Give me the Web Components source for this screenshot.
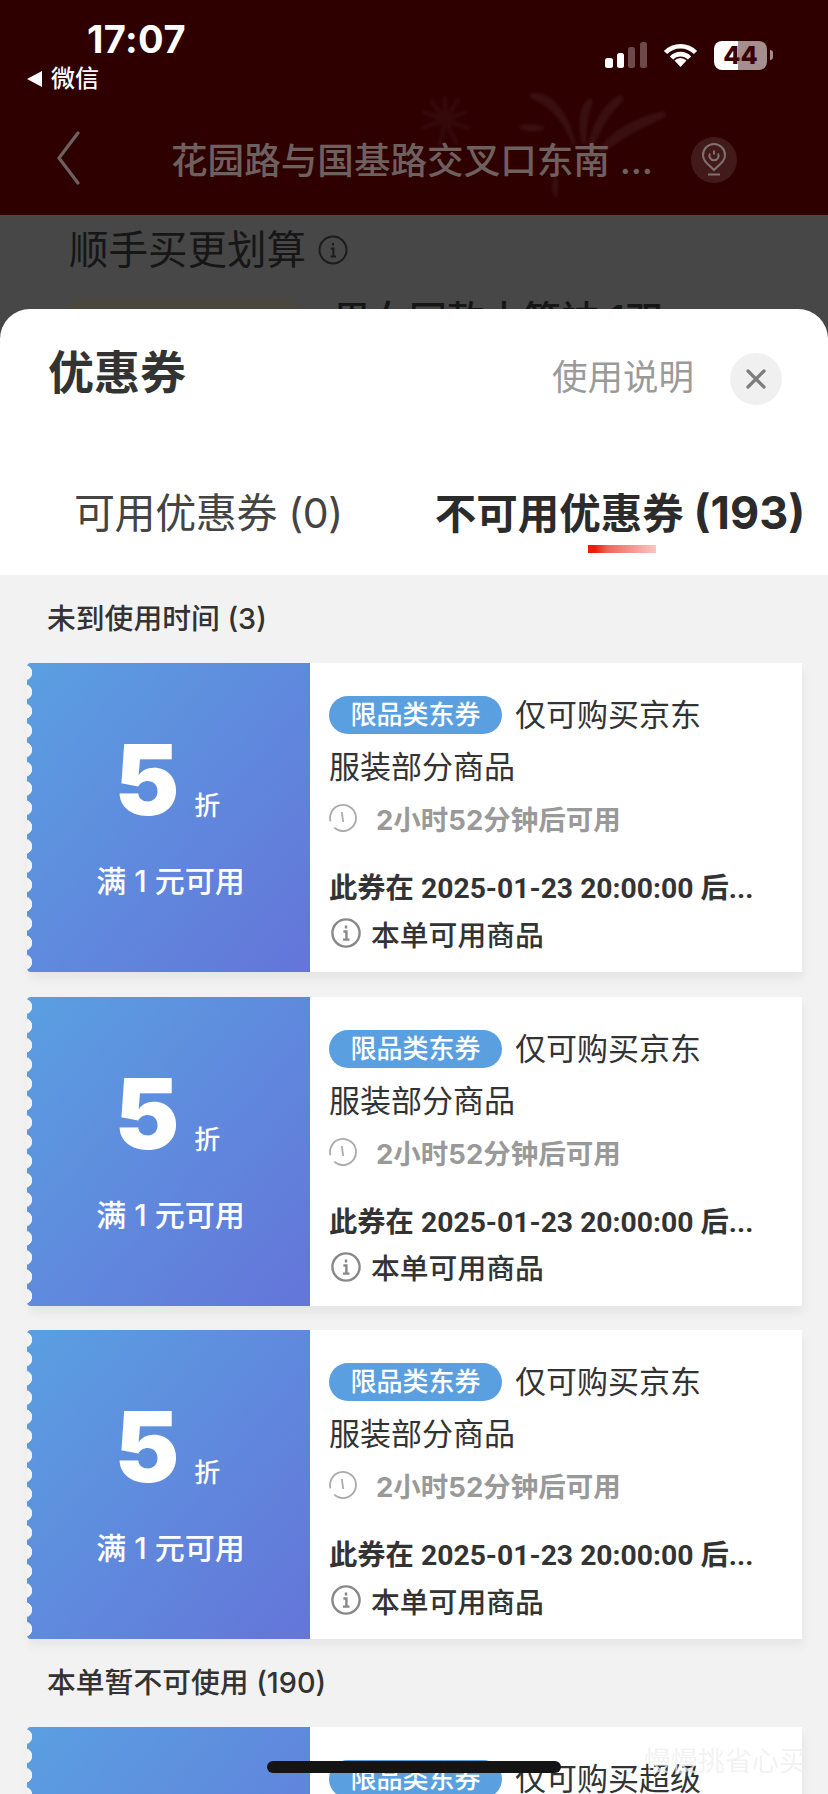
<!DOCTYPE html>
<html lang="zh-CN">
<head>
<meta charset="utf-8">
<title>优惠券</title>
<style>
    html, body {
        margin: 0;
        height: 1794px;
        overflow: hidden;
        background: #474747;
        font-family: Inter, "Noto Sans CJK SC", sans-serif;
        color: #333;
    }
</style>
</head>
<body>
<status-bar></status-bar>
<nav-bar>花园路与国基路交叉口东南 ...</nav-bar>
<behind-sheet></behind-sheet>
<coupon-sheet>
    <coupon-tab slot="tabs">可用优惠券 (0)</coupon-tab>
    <coupon-tab slot="tabs" active>不可用优惠券 <span>(193)</span></coupon-tab>

    <coupon-group label="未到使用时间 (3)">
        <coupon-card amount="5" condition="满 1 元可用" chip="限品类东券">
            仅可购买京东
            <span slot="more">服装部分商品</span>
            <span slot="remain">2小时52分钟后可用</span>
            <span slot="date">此券在 2025-01-23 20:00:00 后...</span>
        </coupon-card>
        <coupon-card amount="5" condition="满 1 元可用" chip="限品类东券">
            仅可购买京东
            <span slot="more">服装部分商品</span>
            <span slot="remain">2小时52分钟后可用</span>
            <span slot="date">此券在 2025-01-23 20:00:00 后...</span>
        </coupon-card>
        <coupon-card amount="5" condition="满 1 元可用" chip="限品类东券">
            仅可购买京东
            <span slot="more">服装部分商品</span>
            <span slot="remain">2小时52分钟后可用</span>
            <span slot="date">此券在 2025-01-23 20:00:00 后...</span>
        </coupon-card>
    </coupon-group>
    <coupon-group label="本单暂不可使用 (190)">
        <coupon-card cut chip="限品类东券">仅可购买超级</coupon-card>
    </coupon-group>
</coupon-sheet>
<home-indicator>慢慢挑省心买</home-indicator>

<script>
class StatusBar extends HTMLElement {
    constructor() {
        super();
        this.attachShadow({mode: 'open'}).innerHTML = `
        <style>
            :host {
                display: flex;
                justify-content: space-between;
                box-sizing: border-box;
                height: 110px;
                padding: 20px 55px 0 27px;
                background: #2e0000;
                color: #fff;
            }
            .time {
                margin-left: 60px;
                font-size: 38px;
                line-height: 38px;
                font-weight: 700;
                letter-spacing: .4px;
            }
            .back {
                display: flex;
                align-items: center;
                gap: 9px;
                margin-top: 6px;
                font-size: 24px;
                line-height: 30px;
                font-weight: 500;
            }
            .icons {
                display: flex;
                align-items: center;
                height: 30px;
                margin-top: 20px;
            }
            .signal { margin-right: 16px; }
            .wifi { margin-right: 16px; }
            .battery {
                width: 53px;
                height: 29px;
                border-radius: 8px;
                background: linear-gradient(90deg, #fff 45%, #a48e8e 45%);
                color: #3a0006;
                font-size: 25px;
                line-height: 29px;
                font-weight: 800;
                text-align: center;
            }
            .nub {
                width: 3px;
                height: 10px;
                margin-left: 3px;
                border-radius: 0 3px 3px 0;
                background: #a48e8e;
            }
        </style>
        <div>
            <div class="time">17:07</div>
            <div class="back">
                <svg width="15" height="16" viewBox="0 0 15 16"><path d="M15 0v16L0 8z" fill="#fff"/></svg>
                微信
            </div>
        </div>
        <div class="icons">
            <svg class="signal" width="42" height="27" viewBox="0 0 42 27">
                <rect x="0" y="16" width="8" height="10" rx="2.5" fill="#fff"/>
                <rect x="12" y="11" width="7" height="15" rx="2.5" fill="#fff"/>
                <rect x="23" y="5" width="7" height="21" rx="2.5" fill="#6d4a4a"/>
                <rect x="35" y="0" width="7" height="26" rx="2.5" fill="#6d4a4a"/>
            </svg>
            <svg class="wifi" width="35" height="24" viewBox="0 0 35 24">
                <path d="M2.5 9.5A21 21 0 0 1 32.5 9.5M8.5 15A12.5 12.5 0 0 1 26.5 15" fill="none" stroke="#fff" stroke-width="4.6"/>
                <path d="M17.5 24L11.5 17.6A8 8 0 0 1 23.5 17.6z" fill="#fff"/>
            </svg>
            <div class="battery">44</div>
            <div class="nub"></div>
        </div>`;
    }
}

class NavBar extends HTMLElement {
    constructor() {
        super();
        this.attachShadow({mode: 'open'}).innerHTML = `
        <style>
            :host {
                display: flex;
                align-items: center;
                position: relative;
                box-sizing: border-box;
                height: 105px;
                padding: 0 91px 5px 56px;
                background: #2e0000;
                color: #6f6060;
                font-size: 36.6px;
            }
            .fireworks { position: absolute; left: 0; top: -110px; filter: blur(1.5px); }
            .title {
                position: relative;
                flex: 1;
                margin: 0 0 4px 91px;
                font-weight: 500;
                white-space: nowrap;
            }
            .back, .pin { position: relative; flex: none; }
            .back { margin-bottom: 4px; }
        </style>
        <svg class="fireworks" width="828" height="215" viewBox="0 0 828 215" fill="#fff" fill-opacity=".06">
            <g stroke="#fff" stroke-opacity=".035" stroke-width="5" stroke-linecap="round">
                <path d="M445 120V98M445 120L458 100M445 120L466 112M445 120L468 128M445 120L456 142M445 120L440 144M445 120L424 112M445 120L422 128M445 120L432 102"/>
            </g>
            <path d="M572 146C566 124 552 108 533 99C527 96 530 92 538 93C556 95 570 118 576 144z"/>
            <path d="M582 144C578 126 578 110 586 101C590 96 594 99 592 105C588 118 586 130 586 144z"/>
            <path d="M588 146C592 124 602 106 616 97C622 93 626 97 622 102C610 114 600 130 594 147z"/>
            <path d="M598 150C612 130 634 118 660 112C668 110 668 116 662 119C640 128 620 140 602 154z"/>
            <path d="M518 127C526 122 538 124 546 128C538 133 526 133 518 127z"/>
            <path d="M552 190C556 198 556 206 558 190C560 172 552 172 552 190z"/>
        </svg>
        <svg class="back" width="24" height="54" viewBox="0 0 24 54">
            <path d="M22 2L3 27L22 52" fill="none" stroke="#6f6060" stroke-width="3.2" stroke-linecap="round" stroke-linejoin="round"/>
        </svg>
        <div class="title"><slot></slot></div>
        <svg class="pin" width="46" height="46" viewBox="0 0 46 46">
            <circle cx="23" cy="23" r="23" fill="#fff" fill-opacity=".1"/>
            <path d="M23 33C17 27 12 24 12 18A11 11 0 0 1 34 18C34 24 29 27 23 33z" fill="none" stroke="#817272" stroke-width="2"/>
            <path d="M19 16.5a4.6 4.6 0 1 0 8 0M23 13.5v4M17 37.5h12" fill="none" stroke="#817272" stroke-width="2"/>
        </svg>`;
    }
}

class BehindSheet extends HTMLElement {
    constructor() {
        super();
        this.attachShadow({mode: 'open'}).innerHTML = `
        <style>
            :host {
                display: block;
                box-sizing: border-box;
                height: 94px;
                padding: 10px 0 0 69px;
                overflow: hidden;
                background: #474747;
                color: #161616;
                font-size: 39.5px;
            }
            .head {
                display: flex;
                align-items: center;
                gap: 12px;
                height: 50px;
                line-height: 50px;
            }
            .goods {
                display: flex;
                gap: 33px;
                margin-top: 25px;
            }
            .thumb {
                width: 231px;
                height: 160px;
                border-radius: 12px;
                background: #4a473c;
            }
            .name { margin-top: -6px; line-height: 50px; font-weight: 500; font-size: 38px; white-space: nowrap; }
        </style>
        <div class="head">
            顺手买更划算
            <svg width="30" height="30" viewBox="0 0 30 30">
                <circle cx="15" cy="15" r="13.5" fill="none" stroke="#1c1c1c" stroke-width="2"/>
                <path d="M15 8v2.5M12.8 13.5h2.6v8M12.5 21.5h5.5" fill="none" stroke="#1c1c1c" stroke-width="2"/>
            </svg>
        </div>
        <div class="goods">
            <div class="thumb"></div>
            <div class="name">男女同款大筒袜 1双</div>
        </div>`;
    }
}

class CouponSheet extends HTMLElement {
    constructor() {
        super();
        this.attachShadow({mode: 'open'}).innerHTML = `
        <style>
            :host {
                display: block;
                height: 1485px;
                overflow: hidden;
                border-radius: 30px 30px 0 0;
                background: #fff;
            }
            .head {
                display: flex;
                align-items: flex-start;
                box-sizing: border-box;
                height: 181px;
                padding: 40px 46px 0 48px;
            }
            h1 {
                flex: 1;
                margin: 0;
                font-size: 46px;
                line-height: 46px;
                font-weight: 700;
                color: #333;
            }
            .help {
                margin-top: 6px;
                font-size: 35.5px;
                line-height: 46px;
                color: #9a9a9a;
            }
            .close {
                display: flex;
                align-items: center;
                justify-content: center;
                width: 52px;
                height: 52px;
                margin: 4px 0 0 36px;
                border-radius: 50%;
                background: #f0f0f0;
            }
            .tabs {
                display: flex;
                gap: 92px;
                height: 85px;
                padding-left: 74px;
            }
            .list {
                display: flex;
                flex-direction: column;
                padding: 0 26px 0 27px;
                background: #f2f2f2;
            }
        </style>
        <div class="head">
            <h1>优惠券</h1>
            <div class="help">使用说明</div>
            <div class="close">
                <svg width="22" height="22" viewBox="0 0 22 22">
                    <path d="M3 3L19 19M19 3L3 19" stroke="#7d7d7d" stroke-width="3.2" stroke-linecap="round"/>
                </svg>
            </div>
        </div>
        <div class="tabs"><slot name="tabs"></slot></div>
        <div class="list"><slot></slot></div>`;
    }
}

class CouponTab extends HTMLElement {
    constructor() {
        super();
        this.attachShadow({mode: 'open'}).innerHTML = `
        <style>
            :host {
                display: flex;
                flex-direction: column;
                align-items: center;
                gap: 8px;
                font-size: 41px;
                line-height: 46px;
                letter-spacing: -.4px;
                color: #444;
                white-space: nowrap;
            }
            :host([active]) { font-size: 41.5px; letter-spacing: 0; font-weight: 700; color: #2b2b2b; }
            ::slotted(span) { font-size: 45px; }
            .label { display: block; }
            .bar {
                width: 68px;
                height: 8px;
                margin-left: 4px;
                visibility: hidden;
                background: linear-gradient(90deg, #ee1c0c 0 10%, #ee6a60 30%, #f8c6c2);
            }
            :host([active]) .bar { visibility: visible; }
        </style>
        <div class="label"><slot></slot></div>
        <div class="bar"></div>`;
    }
}

class CouponGroup extends HTMLElement {
    constructor() {
        super();
        this.attachShadow({mode: 'open'}).innerHTML = `
        <style>
            :host {
                display: flex;
                flex-direction: column;
                gap: 24.5px;
            }
            h2 {
                margin: 0 0 -24.5px;
                padding-left: 20px;
                height: 88px;
                font-size: 28.8px;
                line-height: 88px;
                font-weight: 500;
                color: #333;
            }
        </style>
        <h2></h2>
        <slot></slot>`;
        this.shadowRoot.querySelector('h2').textContent = this.getAttribute('label');
    }
}

class CouponCard extends HTMLElement {
    constructor() {
        super();
        this.attachShadow({mode: 'open'}).innerHTML = `
        <style>
            :host {
                display: flex;
                flex: none;
                height: 309px;
                box-shadow: 2px 7px 9px rgba(0, 0, 0, .05);
            }
            .left {
                box-sizing: border-box;
                flex: none;
                width: 283px;
                padding-top: 67px;
                border-radius: 4px 0 0 4px;
                color: #fff;
                background:
                    radial-gradient(circle at -2.5px 50%, #f2f2f2 7.4px, transparent 8px) 0 0 / 8px 19.3px repeat-y,
                    linear-gradient(130deg, #5a9fe1, #6475d9);
            }
            .face {
                display: flex;
                flex-direction: column;
                align-items: center;
            }
            .value {
                display: flex;
                align-items: baseline;
                gap: 15px;
                margin-left: -2px;
                height: 100px;
                font-size: 97px;
                line-height: 100px;
                font-weight: 900;
            }
            .unit { font-size: 26px; font-weight: 500; }
            .condition {
                margin-top: 31px;
                margin-left: 4px;
                font-size: 30px;
                line-height: 40px;
                font-weight: 500;
                white-space: nowrap;
            }
            .right {
                flex: 1;
                box-sizing: border-box;
                padding: 26px 0 0 19px;
                background: #fff;
            }
            .title {
                font-size: 31px;
                line-height: 52px;
                color: #333;
            }
            .first {
                display: flex;
                align-items: center;
                gap: 13px;
                height: 52px;
            }
            .chip {
                box-sizing: border-box;
                width: 173px;
                height: 38px;
                border-radius: 19px;
                background: #5aa0e0;
                color: #fff;
                font-size: 26px;
                line-height: 38px;
                font-weight: 500;
                text-align: center;
            }
            .row {
                display: flex;
                align-items: center;
                height: 52px;
            }
            .remain {
                gap: 19px;
                margin-top: -1px;
                font-size: 27.5px;
                font-weight: 700;
                color: #999;
            }
            .date {
                height: 43px;
                margin-top: 20px;
                font-family: Roboto, "Noto Sans CJK SC", sans-serif;
                font-size: 28.3px;
                font-weight: 700;
                color: #333;
                white-space: nowrap;
            }
            .usable {
                gap: 10px;
                margin-left: 2px;
                font-size: 28.8px;
                font-weight: 500;
                color: #333;
            }
            :host([cut]) .face, :host([cut]) .lower { display: none; }
        </style>
        <div class="left">
            <div class="face">
                <div class="value"><span class="amount"></span><span class="unit">折</span></div>
                <div class="condition"></div>
            </div>
        </div>
        <div class="right">
            <div class="title">
                <div class="first"><span class="chip"></span><slot></slot></div>
                <slot name="more"></slot>
            </div>
            <div class="lower">
                <div class="row remain">
                    <svg width="28" height="28" viewBox="0 0 28 28" fill="none" stroke="#aaa" stroke-width="1.8">
                        <circle cx="14" cy="14" r="13" stroke-dasharray="73.7 8" transform="rotate(165 14 14)"/>
                        <path d="M12.8 8l1.4 10"/>
                    </svg>
                    <slot name="remain"></slot>
                </div>
                <div class="row date"><slot name="date"></slot></div>
                <div class="row usable">
                    <svg width="30" height="30" viewBox="0 0 30 30" fill="none" stroke="#888" stroke-width="2.4">
                        <circle cx="15" cy="15" r="13.6"/>
                        <path d="M15 7.5v3M12.4 13.5h3v8M12 21.6h6.5"/>
                    </svg>
                    本单可用商品
                </div>
            </div>
        </div>`;
    }

    connectedCallback() {
        const root = this.shadowRoot;
        root.querySelector('.amount').textContent = this.getAttribute('amount');
        root.querySelector('.condition').textContent = this.getAttribute('condition');
        root.querySelector('.chip').textContent = this.getAttribute('chip');
    }
}

class HomeIndicator extends HTMLElement {
    constructor() {
        super();
        this.attachShadow({mode: 'open'}).innerHTML = `
        <style>
            :host { display: block; }
            .bar {
                position: fixed;
                left: 267px;
                top: 1761px;
                width: 294px;
                height: 12px;
                border-radius: 6px;
                background: #141414;
            }
            .mark {
                position: fixed;
                left: 644px;
                top: 1745px;
                font-size: 27px;
                line-height: 34px;
                color: rgba(238, 238, 238, .75);
                white-space: nowrap;
            }
        </style>
        <div class="mark"><slot></slot></div>
        <div class="bar"></div>`;
    }
}

customElements.define('status-bar', StatusBar);
customElements.define('nav-bar', NavBar);
customElements.define('behind-sheet', BehindSheet);
customElements.define('coupon-sheet', CouponSheet);
customElements.define('coupon-tab', CouponTab);
customElements.define('coupon-group', CouponGroup);
customElements.define('coupon-card', CouponCard);
customElements.define('home-indicator', HomeIndicator);
</script>
</body>
</html>
